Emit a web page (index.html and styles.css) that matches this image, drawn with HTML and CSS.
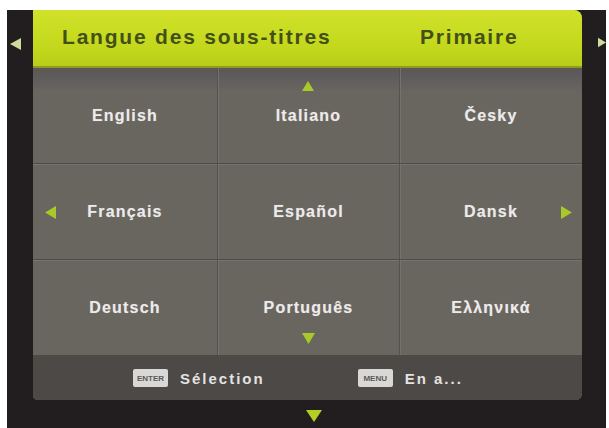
FILE: index.html
```html
<!DOCTYPE html>
<html lang="fr">
<head>
<meta charset="utf-8">
<title>Langue des sous-titres</title>
<link rel="stylesheet" href="styles.css">
</head>
<body>
<div class="screen">
  <div class="gutter gutter-left">
    <svg class="nav-arrow" width="11" height="12" viewBox="0 0 11 12"><polygon points="11,0 11,12 0,6"/></svg>
  </div>

  <div class="panel">
    <div class="panel-head">
      <span class="head-title">Langue des sous-titres</span>
      <span class="head-value">Primaire</span>
    </div>

    <div class="lang-grid">
      <div class="cell">English</div>
      <div class="cell">
        <svg class="mark mark-up" width="12" height="10" viewBox="0 0 12 10"><polygon points="6,0 12,10 0,10"/></svg>
        Italiano
      </div>
      <div class="cell">Česky</div>

      <div class="cell">
        <svg class="mark mark-left" width="11" height="13" viewBox="0 0 11 13"><polygon points="11,0 11,13 0,6.5"/></svg>
        Français
      </div>
      <div class="cell">Español</div>
      <div class="cell">
        Dansk
        <svg class="mark mark-right" width="11" height="13" viewBox="0 0 11 13"><polygon points="0,0 11,6.5 0,13"/></svg>
      </div>

      <div class="cell">Deutsch</div>
      <div class="cell">
        Português
        <svg class="mark mark-down" width="13" height="11" viewBox="0 0 13 11"><polygon points="0,0 13,0 6.5,11"/></svg>
      </div>
      <div class="cell">Ελληνικά</div>
    </div>

    <div class="panel-foot">
      <div class="hint"><span class="key">ENTER</span><span>Sélection</span></div>
      <div class="hint"><span class="key">MENU</span><span>En a...</span></div>
    </div>
  </div>

  <div class="gutter gutter-right">
    <svg class="nav-arrow" width="11" height="13" viewBox="0 0 11 13"><polygon points="0,0 11,6.5 0,13"/></svg>
  </div>

  <div class="below">
    <svg class="down-arrow" width="16" height="12" viewBox="0 0 16 12"><polygon points="0,0 16,0 8,12"/></svg>
  </div>
</div>
</body>
</html>
```

FILE: styles.css
```css
html, body {
  margin: 0;
  padding: 0;
  background: #ffffff;
}

body {
  width: 609px;
  height: 428px;
  overflow: hidden;
  font-family: "Liberation Sans", Arial, sans-serif;
  font-weight: bold;
}

/* dark TV frame */
.screen {
  margin: 10px 3px 0 7px;
  height: 418px;
  background: #221e1f;
  display: grid;
  grid-template-columns: 26px 549px 24px;
  grid-template-rows: 390px 28px;
  overflow: hidden;
}

.gutter {
  display: flex;
  align-items: flex-start;
}

.gutter-left {
  padding: 28px 0 0 3px;
}

.gutter-right {
  padding: 26px 0 0 16px;
}

.nav-arrow {
  fill: #cfdc9c;
}

/* main panel */
.panel {
  display: flex;
  flex-direction: column;
  background: #69655f;
  border-radius: 0 8px 6px 5px;
  overflow: hidden;
  box-shadow: inset 1px 0 0 #7c7874;
}

.panel-head {
  height: 58px;
  box-sizing: border-box;
  display: flex;
  align-items: center;
  padding: 0 0 2px 29px;
  background: linear-gradient(#d0e22a, #c4d91e 60%, #b9ce18);
  border-bottom: 2px solid #8e9b1c;
  color: #434f17;
  font-size: 21px;
  letter-spacing: 1.8px;
}

.head-title {
  width: 358px;
}

.lang-grid {
  display: grid;
  grid-template-columns: 184px 182px 183px;
  grid-template-rows: 96px 96px 96px;
  background: linear-gradient(#5a5757, #64605e 16px, #69655f 24px);
}

.cell {
  position: relative;
  display: flex;
  align-items: center;
  justify-content: center;
  color: #ecebea;
  font-size: 16px;
  letter-spacing: 1.2px;
  text-shadow: 0 0 1px rgba(255, 255, 255, 0.35);
  border-bottom: 1px solid #4e4a48;
  box-shadow: inset 0 1px 0 #77736f;
}

.cell:nth-child(3n+2),
.cell:nth-child(3n) {
  border-left: 1px solid #55514f;
  box-shadow: inset 0 1px 0 #77736f, inset 1px 0 0 #75716d;
}

.lang-grid .cell:nth-child(-n+3) {
  box-shadow: none;
}

.lang-grid .cell:nth-child(2),
.lang-grid .cell:nth-child(3) {
  box-shadow: inset 1px 0 0 #75716d;
}

.mark {
  position: absolute;
  fill: #a9c92a;
}

.mark-up {
  top: 13px;
  left: 84px;
}

.mark-down {
  bottom: 11px;
  left: 84px;
}

.mark-left {
  left: 12px;
  top: 42px;
}

.mark-right {
  right: 10px;
  top: 42px;
}

/* key hints */
.panel-foot {
  flex: 1;
  display: flex;
  align-items: center;
  background: #4c4947;
  color: #e4e3e1;
  font-size: 15px;
  letter-spacing: 2px;
  padding: 0 0 0 100px;
}

.hint {
  display: flex;
  align-items: center;
  gap: 12px;
}

.hint + .hint {
  margin-left: 93px;
}

.key {
  width: 35px;
  height: 18px;
  display: flex;
  align-items: center;
  justify-content: center;
  background: #d9d8d6;
  border-radius: 2px;
  color: #5a5856;
  font-size: 8px;
  letter-spacing: 0;
}

.below {
  grid-column: 2;
  display: flex;
  justify-content: center;
  padding: 10px 0 0 12px;
}

.down-arrow {
  fill: #b3cf22;
}
```
